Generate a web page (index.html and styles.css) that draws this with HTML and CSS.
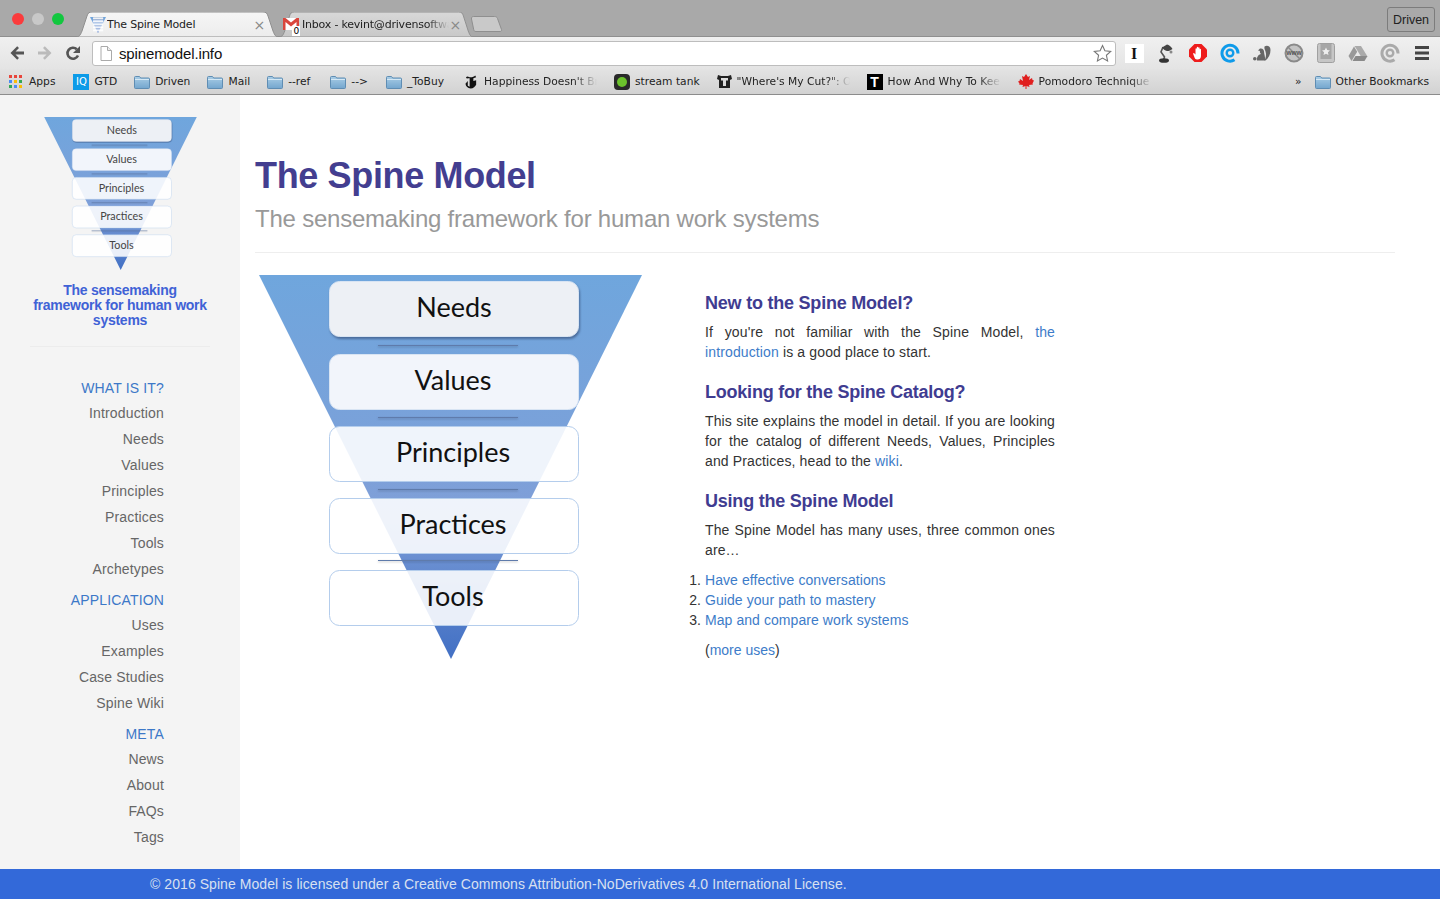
FILE: index.html
```html
<!DOCTYPE html>
<html lang="en">

<head>
  <meta charset="UTF-8">
  <title>The Spine Model</title>
  <link rel="stylesheet" href="styles.css">
</head>

<body>
  <svg class="defs" width="0" height="0">
    <defs>
      <linearGradient id="funnelFill" x1="0" y1="0" x2="0" y2="1">
        <stop offset="0" stop-color="#6fa6dd" />
        <stop offset="0.6" stop-color="#7f9fd8" />
        <stop offset="1" stop-color="#4270c4" />
      </linearGradient>
      <linearGradient id="folderFill" x1="0" y1="0" x2="0" y2="1">
        <stop offset="0" stop-color="#a9cde6" />
        <stop offset="1" stop-color="#74a6ce" />
      </linearGradient>
      <linearGradient id="tabOn" x1="0" y1="0" x2="0" y2="1">
        <stop offset="0" stop-color="#f6f6f6" />
        <stop offset="1" stop-color="#ececec" />
      </linearGradient>
      <linearGradient id="tabOff" x1="0" y1="0" x2="0" y2="1">
        <stop offset="0" stop-color="#d8d8d8" />
        <stop offset="1" stop-color="#c8c8c8" />
      </linearGradient>
      <symbol id="funnel" viewBox="0 0 383 384">
        <polygon points="0,0 383,0 192,384" fill="url(#funnelFill)" />
        <rect class="box box-top" x="70.5" y="6.5" width="249" height="55" rx="10" />
        <rect class="box box-second" x="70.5" y="79.5" width="249" height="55" rx="10" />
        <rect class="box box-clear" x="70.5" y="151.5" width="249" height="55" rx="10" />
        <rect class="box box-clear" x="70.5" y="223.5" width="249" height="55" rx="10" />
        <rect class="box box-clear" x="70.5" y="295.5" width="249" height="55" rx="10" />
        <line class="rule" x1="119" x2="259" y1="70.5" y2="70.5" />
        <line class="rule" x1="119" x2="259" y1="142.5" y2="142.5" />
        <line class="rule" x1="119" x2="259" y1="214.5" y2="214.5" />
        <line class="rule" x1="119" x2="259" y1="285.5" y2="285.5" />
        <text class="box-label" x="195" y="42">Needs</text>
        <text class="box-label" x="194" y="115">Values</text>
        <text class="box-label" x="194" y="187">Principles</text>
        <text class="box-label" x="194" y="259">Practices</text>
        <text class="box-label" x="194" y="331">Tools</text>
      </symbol>
      <symbol id="folder" viewBox="0 0 16 14">
        <path d="M0.5 2.500a1 1 0 0 1 1-1h4l1.200 1.500h7.800a1 1 0 0 1 1 1v8.500a1 1 0 0 1-1 1h-13a1 1 0 0 1-1-1z" fill="url(#folderFill)" stroke="#5f8db3" />
        <path d="M1 4.500h14" stroke="#d5e8f4" />
      </symbol>
      <symbol id="ring" viewBox="0 0 20 20">
        <path d="M14.500 16.800A8 8 0 1 1 18 10v.5" fill="none" stroke="currentColor" stroke-width="3" />
        <circle cx="10" cy="10" r="3.300" fill="none" stroke="currentColor" stroke-width="2.400" />
      </symbol>
    </defs>
  </svg>

  <header class="browser">
    <div class="title-bar">
      <div class="lights">
        <span class="light light-red"></span>
        <span class="light light-grey"></span>
        <span class="light light-green"></span>
      </div>
      <div class="tab tab-active">
        <svg class="tab-shape" viewBox="0 0 204 25" preserveAspectRatio="none">
          <path d="M0 25c4 0 5-1 7-6l5-15c1-3 2-4 5-4h171c3 0 4 1 5 4l5 15c2 5 3 6 6 6z" fill="url(#tabOn)" stroke="#8f8f8f" />
        </svg>
        <svg class="tab-icon" width="16" height="16"><use href="#funnel" /></svg>
        <span class="tab-title">The Spine Model</span>
        <span class="tab-close">×</span>
      </div>
      <div class="tab tab-other">
        <svg class="tab-shape" viewBox="0 0 204 25" preserveAspectRatio="none">
          <path d="M0 25c4 0 5-1 7-6l5-15c1-3 2-4 5-4h171c3 0 4 1 5 4l5 15c2 5 3 6 6 6z" fill="url(#tabOff)" stroke="#8f8f8f" />
        </svg>
        <span class="gmail-icon">
          <svg width="16" height="14" viewBox="0 0 16 14">
            <rect x="0" y="1" width="16" height="12" fill="#fff" />
            <path d="M0 1h2.500l5.500 4.500 5.500-4.500h2.500v12h-2.500v-8l-5.500 4.500-5.500-4.500v8h-2.500z" fill="#d9463d" />
          </svg>
          <span class="gmail-count">0</span>
        </span>
        <span class="tab-title tab-fade">Inbox - kevint@drivensoftware.com</span>
        <span class="tab-close">×</span>
      </div>
      <svg class="new-tab" width="34" height="16" viewBox="0 0 34 16">
        <path d="M1.500 3c-.3-1.500.5-2.500 2-2.500h21c1.500 0 2.500.5 3 2l4 11c.4 1-.2 2-1.500 2h-24c-1.500 0-2-.5-2.300-2z" fill="#c9c9c9" stroke="#8f8f8f" />
      </svg>
      <button class="profile">Driven</button>
    </div>

    <div class="toolbar">
      <svg class="nav-icon" viewBox="0 0 16 16"><path d="M15 6.500H6.500L10 3 8.200 1.300 1.500 8l6.700 6.700L10 13 6.500 9.500H15z" fill="#555" /></svg>
      <svg class="nav-icon" viewBox="0 0 16 16"><path d="M1 6.500h8.500L6 3l1.800-1.700L14.500 8l-6.700 6.700L6 13l3.500-3.500H1z" fill="#bbb" /></svg>
      <svg class="nav-icon" viewBox="0 0 16 16"><path d="M13 10.500A5.500 5.500 0 1 1 11.800 4.200" fill="none" stroke="#555" stroke-width="2.600" /><path d="M15 1v7H8z" fill="#555" /></svg>
      <div class="omnibox">
        <svg class="page-icon" width="12" height="15" viewBox="0 0 12 15"><path d="M1 .5h6.500l4 4v10H1z" fill="#fff" stroke="#aaa" /><path d="M7.500.5v4h4" fill="#eee" stroke="#aaa" /></svg>
        <span class="url">spinemodel.info</span>
        <svg class="star" width="19" height="19" viewBox="0 0 19 19"><path d="M9.500 1.500l2.400 5.300 5.800.6-4.300 3.900 1.200 5.700-5.100-2.900-5.100 2.900 1.200-5.700L1.300 7.400l5.800-.6z" fill="#fff" stroke="#777" stroke-width="1.100" /></svg>
      </div>
      <div class="extensions">
        <span class="ext"><span class="ext-i">I</span></span>
        <span class="ext">
          <svg width="16" height="19" viewBox="0 0 16 19"><path d="M5 3L3 8l3.500 5-1 3" fill="none" stroke="#555" stroke-width="1.600" /><path d="M4 3.500L9 .5c2 .5 4 2 5.500 4.500L12 6.500c-1 .5-2 .5-3 .5-2-.5-4-2-5-3.500z" fill="#444" /><circle cx="13" cy="8" r="1.500" fill="#888" /><ellipse cx="6" cy="16.500" rx="5" ry="2.300" fill="#333" /></svg>
        </span>
        <span class="ext">
          <svg width="18" height="18" viewBox="0 0 18 18"><path d="M5.500 0h7L18 5.500v7L12.500 18h-7L0 12.500v-7z" fill="#ee1c1c" /><path d="M4 9.500l1-.5 1.500 1.500V5c0-1 1.300-1 1.300 0V3.500c0-1 1.400-1 1.400 0V4c0-1 1.400-1 1.400 0v1.500c0-1 1.400-1 1.400 0V12c0 2.500-1.500 3.500-3.500 3.500H8c-1.500 0-2-1-2.500-2z" fill="#fff" /></svg>
        </span>
        <span class="ext ring-blue"><svg width="20" height="20"><use href="#ring" /></svg></span>
        <span class="ext">
          <svg width="18" height="16" viewBox="0 0 18 16"><circle cx="1.800" cy="13.800" r="1.800" fill="#666" /><path d="M4 15.500C3.500 12 5.500 9.500 8 9 7 8 6.500 7 7 6L5 5.500 7 3.500c2.500-.5 4 1 4 3 0 2.500 1.500 5 1 9z" fill="#666" /><path d="M11.500 1.500c2.500-1.500 6-.5 6 3.500 0 4.500-2 8-5 10.500h-1c1.500-3 2-6 1-9-.5-1.500-1.500-3-1-5z" fill="#666" /></svg>
        </span>
        <span class="ext">
          <svg width="20" height="20" viewBox="0 0 20 20"><circle cx="10" cy="10" r="8.500" fill="#c4c4c4" stroke="#8a8a8a" stroke-width="2" /><path d="M4 4l12 12" stroke="#8a8a8a" stroke-width="1.500" /><text class="www" x="10" y="12">www</text></svg>
        </span>
        <span class="ext">
          <svg width="18" height="20" viewBox="0 0 18 20"><rect x=".5" y=".5" width="17" height="19" rx="2" fill="#c6c6c6" stroke="#a0a0a0" /><rect x="3.500" y="1" width="11" height="15" fill="#a6a6a6" /><path d="M9 4.500l1.200 2.600 2.800.3-2.100 1.900.6 2.800L9 10.700l-2.500 1.400.6-2.800L5 7.400l2.800-.3z" fill="#eee" /></svg>
        </span>
        <span class="ext">
          <svg width="20" height="17" viewBox="0 0 20 17"><path d="M6.500 1h6.500l6.500 10.500h-6.500z" fill="#aaa" /><path d="M6 1.500l3.200 5.300L3.500 16 .5 11z" fill="#999" /><path d="M4.500 16l3-5h12l-3 5z" fill="#8a8a8a" /></svg>
        </span>
        <span class="ext ring-grey"><svg width="20" height="20"><use href="#ring" /></svg></span>
        <span class="ext">
          <svg width="14" height="14" viewBox="0 0 14 14"><path d="M0 1.500h14M0 7h14M0 12.500h14" stroke="#444" stroke-width="3" /></svg>
        </span>
      </div>
    </div>

    <nav class="bookmarks">
      <a class="bm">
        <svg class="apps-icon" width="13" height="13" viewBox="0 0 13 13">
          <rect width="3" height="3" fill="#e8453c" /><rect x="5" width="3" height="3" fill="#e8453c" /><rect x="10" width="3" height="3" fill="#e8453c" />
          <rect y="5" width="3" height="3" fill="#4a8af4" /><rect x="5" y="5" width="3" height="3" fill="#fbbc05" /><rect x="10" y="5" width="3" height="3" fill="#34a853" />
          <rect y="10" width="3" height="3" fill="#34a853" /><rect x="5" y="10" width="3" height="3" fill="#4a8af4" /><rect x="10" y="10" width="3" height="3" fill="#fbbc05" />
        </svg>Apps
      </a>
      <a class="bm push-1"><span class="iq-icon">IQ</span>GTD</a>
      <a class="bm"><svg class="folder" width="16" height="14"><use href="#folder" /></svg>Driven</a>
      <a class="bm"><svg class="folder" width="16" height="14"><use href="#folder" /></svg>Mail</a>
      <a class="bm"><svg class="folder" width="16" height="14"><use href="#folder" /></svg>--ref</a>
      <a class="bm push-3"><svg class="folder" width="16" height="14"><use href="#folder" /></svg>--&gt;</a>
      <a class="bm push-1"><svg class="folder" width="16" height="14"><use href="#folder" /></svg>_ToBuy</a>
      <a class="bm bm-nyt">
        <svg width="13" height="16" viewBox="0 0 14 16"><path d="M1 3c2-2 3 0 5 0s4-1 5-2l1 2-3 1v3l3-1v5c-1 2-3 4-6 4-3 0-5-2-5.500-5L3 7v5l2 1V4C3 4 2 5 1 3z" fill="#111" /></svg>
        <span class="bm-fade">Happiness Doesn't Bring Good Work</span>
      </a>
      <a class="bm">
        <span class="stream-icon"><span class="stream-dot"></span></span>stream tank
      </a>
      <a class="bm">
        <svg width="15" height="15" viewBox="0 0 15 15"><path d="M1 1c2 1 4 1 6.500 1S12 2 14 1l1 4-2 1v8H2V6L0 5z" fill="#222" /><path d="M4 4h7v2.500H9V12H6V6.500H4z" fill="#ddd" /></svg>
        <span class="bm-fade">"Where's My Cut?": On Unpaid</span>
      </a>
      <a class="bm">
        <span class="t-icon">T</span>
        <span class="bm-fade">How And Why To Keep Going</span>
      </a>
      <a class="bm">
        <svg width="16" height="15" viewBox="0 0 16 15"><path d="M8 0l2 3 2-1-1 4 3-2 .5 2 1.500.5-1.500 3 .5 1-4 .5.500 2-3-1v3H7.500v-3l-3 1 .5-2-4-.5.5-1L0 7.500 1.500 7 2 5l3 2-1-5 2 1z" fill="#e01f1f" /></svg>
        <span class="bm-fade">Pomodoro Technique Timer</span>
      </a>
      <span class="bm-more">»</span>
      <a class="bm"><svg class="folder" width="16" height="14"><use href="#folder" /></svg>Other Bookmarks</a>
    </nav>
  </header>

  <div class="layout">
    <aside class="sidebar">
      <svg class="side-logo" width="153" height="153"><use href="#funnel" /></svg>
      <p class="tagline">The sensemaking framework for human work systems</p>
      <hr class="side-rule">
      <ul class="side-nav">
        <li class="nav-head"><a href="#">WHAT IS IT?</a></li>
        <li><a href="#">Introduction</a></li>
        <li><a href="#">Needs</a></li>
        <li><a href="#">Values</a></li>
        <li><a href="#">Principles</a></li>
        <li><a href="#">Practices</a></li>
        <li><a href="#">Tools</a></li>
        <li><a href="#">Archetypes</a></li>
        <li class="nav-head"><a href="#">APPLICATION</a></li>
        <li><a href="#">Uses</a></li>
        <li><a href="#">Examples</a></li>
        <li><a href="#">Case Studies</a></li>
        <li><a href="#">Spine Wiki</a></li>
        <li class="nav-head"><a href="#">META</a></li>
        <li><a href="#">News</a></li>
        <li><a href="#">About</a></li>
        <li><a href="#">FAQs</a></li>
        <li><a href="#">Tags</a></li>
      </ul>
    </aside>

    <main class="main">
      <h1>The Spine Model</h1>
      <p class="subtitle">The sensemaking framework for human work systems</p>
      <hr class="main-rule">
      <div class="columns">
        <svg class="main-diagram" width="383" height="384"><use href="#funnel" /></svg>
        <section class="intro">
          <h3>New to the Spine Model?</h3>
          <p>If you're not familiar with the Spine Model, <a href="#">the introduction</a> is a good place to start.</p>
          <h3>Looking for the Spine Catalog?</h3>
          <p>This site explains the model in detail. If you are looking for the catalog of different Needs, Values, Principles and Practices, head to the <a href="#">wiki</a>.</p>
          <h3>Using the Spine Model</h3>
          <p>The Spine Model has many uses, three common ones are…</p>
          <ol>
            <li><a href="#">Have effective conversations</a></li>
            <li><a href="#">Guide your path to mastery</a></li>
            <li><a href="#">Map and compare work systems</a></li>
          </ol>
          <p class="more">(<a href="#">more uses</a>)</p>
        </section>
      </div>
    </main>
  </div>

  <footer class="footer">© 2016 Spine Model is licensed under a Creative Commons Attribution-NoDerivatives 4.0 International License.</footer>
</body>

</html>
```

FILE: styles.css
```css
* {
  box-sizing: border-box;
}

html,
body {
  margin: 0;
  height: 900px;
  overflow: hidden;
}

body {
  display: flex;
  flex-direction: column;
  font-family: "Liberation Sans", Arial, sans-serif;
  font-size: 14px;
  color: #333;
  background-color: #fff;
  padding-bottom: 1px;
}

a {
  color: #3d7cc9;
  text-decoration: none;
}

.defs {
  position: absolute;
}

/* diagram */
.box {
  stroke: #b4cdec;
  stroke-width: 1;
}

.box-top {
  fill: #edf0f5;
  stroke: #d8e4f3;
  filter: drop-shadow(1px 2px 1px rgba(40, 60, 100, 0.55));
}

.box-second {
  fill: #f2f5fb;
  stroke: #d8e4f3;
}

.box-clear {
  fill: rgba(255, 255, 255, 0.88);
}

.rule {
  stroke: #5f7bab;
  stroke-width: 1.2;
  filter: drop-shadow(0 1px 1px rgba(0, 0, 0, 0.25));
}

.box-label {
  font-family: Lato, "Open Sans", sans-serif;
  font-size: 27px;
  text-anchor: middle;
  fill: currentColor;
}

/* browser chrome */
.browser {
  flex: none;
  height: 95px;
  border-bottom: 1px solid #8c8c8c;
  font-family: "DejaVu Sans", sans-serif;
  font-size: 10.7px;
  color: #222;
}

.title-bar {
  display: flex;
  height: 37px;
  align-items: flex-end;
  background-color: #a9a9a9;
  border-bottom: 1px solid #8f8f8f;
  padding-left: 12px;
  position: relative;
}

.lights {
  display: flex;
  gap: 8px;
  align-self: flex-start;
  margin-top: 13px;
  width: 63px;
}

.light {
  width: 12px;
  height: 12px;
  border-radius: 50%;
}

.light-red {
  background-color: #fb3b3c;
}

.light-grey {
  background-color: #c8c8c8;
}

.light-green {
  background-color: #12c73f;
}

.tab {
  position: relative;
  display: flex;
  align-items: center;
  height: 25px;
  width: 204px;
  margin-bottom: -1px;
  padding: 0 14px 0 15px;
  font-size: 11px;
  letter-spacing: -0.2px;
}

.tab-active {
  z-index: 2;
}

.tab-other {
  width: 196px;
  margin-left: -1px;
  padding-left: 5px;
  padding-right: 13px;
}

.tab-shape {
  position: absolute;
  left: 0;
  top: 0;
  width: 100%;
  height: 100%;
}

.tab-icon,
.gmail-icon,
.tab-title,
.tab-close {
  position: relative;
}

.tab-icon {
  color: transparent;
  flex: none;
}

.tab-title {
  margin-left: 1px;
  flex: 1;
  white-space: nowrap;
  overflow: hidden;
}

.tab-fade {
  -webkit-mask-image: linear-gradient(to right, #000 85%, transparent);
  mask-image: linear-gradient(to right, #000 85%, transparent);
}

.tab-close {
  font-size: 14px;
  color: #888;
}

.gmail-icon {
  flex: none;
  width: 18px;
  height: 18px;
  padding-top: 1px;
}

.gmail-count {
  position: absolute;
  right: 1px;
  bottom: -2px;
  background-color: #fff;
  color: #000;
  font-size: 9px;
  line-height: 10px;
  padding: 0 1px;
}

.new-tab {
  margin-left: -4px;
  margin-bottom: 4px;
  flex: none;
}

.profile {
  position: absolute;
  right: 5px;
  top: 7px;
  width: 48px;
  height: 25px;
  padding: 0;
  background: transparent;
  border: 1px solid #7c7c7c;
  border-radius: 3px;
  font-family: "Liberation Sans", sans-serif;
  font-size: 12.5px;
  color: #222;
}

.toolbar {
  display: flex;
  align-items: center;
  height: 32px;
  padding: 0 2px 0 9px;
  gap: 12px;
  background: linear-gradient(#f0f0f0, #e4e4e4);
}

.nav-icon {
  flex: none;
  width: 16px;
  height: 16px;
}

.omnibox {
  display: flex;
  flex: 1;
  align-items: center;
  height: 25px;
  margin-left: -1px;
  padding: 0 3px 0 7px;
  background-color: #fff;
  border: 1px solid #bdbdbd;
  border-radius: 3px;
}

.url {
  flex: 1;
  margin-left: 7px;
  font-family: "Liberation Sans", sans-serif;
  font-size: 15px;
  letter-spacing: -0.13px;
  color: #111;
}

.extensions {
  display: flex;
  margin-left: -10px;
}

.ext {
  display: flex;
  align-items: center;
  justify-content: center;
  width: 32px;
  height: 24px;
}

.ring-blue {
  color: #0f9bea;
}

.ring-grey {
  color: #aaa;
}

.ext-i {
  display: block;
  width: 19px;
  height: 19px;
  background-color: #fff;
  font-family: "Liberation Serif", serif;
  font-size: 16px;
  font-weight: bold;
  line-height: 19px;
  text-align: center;
  color: #111;
}

.www {
  font-family: "Liberation Sans", sans-serif;
  font-size: 6.5px;
  font-weight: bold;
  text-anchor: middle;
  fill: #555;
}

.bookmarks {
  display: flex;
  align-items: center;
  gap: 17px;
  height: 25px;
  padding: 0 11px 0 9px;
  background: linear-gradient(#e3e3e3, #d2d2d2);
}

.bm {
  display: flex;
  align-items: center;
  gap: 5px;
  color: #222;
  white-space: nowrap;
}

.push-1 {
  margin-left: 1px;
}

.push-3 {
  margin-left: 3px;
}

.bm-nyt {
  gap: 6px;
  margin-left: 4px;
}

.apps-icon {
  margin-right: 2px;
}

.iq-icon {
  display: block;
  width: 16px;
  height: 16px;
  background-color: #0c9be8;
  color: #fff;
  font-size: 10px;
  line-height: 16px;
  text-align: center;
}

.stream-icon {
  display: flex;
  align-items: center;
  justify-content: center;
  width: 16px;
  height: 16px;
  background-color: #2a2a2a;
  border-radius: 4px;
}

.stream-dot {
  width: 10px;
  height: 10px;
  background-color: #6cc32c;
  border-radius: 50%;
}

.t-icon {
  display: block;
  width: 16px;
  height: 16px;
  background-color: #000;
  color: #fff;
  font-family: "Liberation Sans", sans-serif;
  font-size: 14px;
  font-weight: bold;
  line-height: 16px;
  text-align: center;
}

.bm-fade {
  display: block;
  width: 113px;
  overflow: hidden;
  -webkit-mask-image: linear-gradient(to right, #000 80%, transparent);
  mask-image: linear-gradient(to right, #000 80%, transparent);
}

.bm-more {
  margin-left: auto;
  margin-right: -4px;
}

/* page */
.layout {
  display: flex;
  flex: 1;
  min-height: 0;
}

.sidebar {
  flex: none;
  width: 240px;
  padding: 22px 30px 0;
  background-color: #f4f4f4;
}

.side-logo {
  display: block;
  margin: 0 0 0 14px;
  color: #444;
}

.tagline {
  margin: 13px 0 0;
  font-size: 14px;
  font-weight: bold;
  line-height: 15px;
  letter-spacing: -0.25px;
  text-align: center;
  color: #4062d6;
}

.side-rule {
  margin: 18px 0 0;
  border: 0;
  border-top: 1px solid #ececec;
}

.side-nav {
  list-style: none;
  margin: 28px 46px 0 0;
  padding: 0;
  text-align: right;
  letter-spacing: 0.15px;
}

.side-nav li {
  height: 26px;
  line-height: 26px;
}

.side-nav li a {
  color: #666;
}

.side-nav .nav-head {
  height: 25px;
  line-height: 27px;
}

.side-nav .nav-head a {
  color: #3c78c8;
}

.side-nav li + .nav-head {
  margin-top: 5px;
}

.main {
  flex: 1;
  padding: 0 45px 0 15px;
}

h1 {
  margin: 59px 0 0;
  font-size: 36px;
  line-height: 44px;
  font-weight: bold;
  letter-spacing: -0.35px;
  color: #433e90;
}

.subtitle {
  margin: 6px 0 0;
  font-size: 24px;
  line-height: 30px;
  letter-spacing: -0.22px;
  color: #999;
}

.main-rule {
  margin: 18px 0 0;
  border: 0;
  border-top: 1px solid #eee;
}

.columns {
  display: flex;
  padding: 22px 0 0 4px;
}

.main-diagram {
  flex: none;
  color: #111;
}

.intro {
  width: 350px;
  margin-left: 63px;
  padding-top: 17px;
  letter-spacing: 0.13px;
}

.intro h3 {
  margin: 0;
  font-size: 18px;
  line-height: 22px;
  font-weight: bold;
  letter-spacing: -0.22px;
  color: #3f3c91;
}

.intro p {
  margin: 8px 0 19px;
  line-height: 20px;
  text-align: justify;
}

.intro ol {
  margin: -9px 0 10px;
  padding: 0;
  line-height: 20px;
  letter-spacing: 0.07px;
}

.intro .more {
  margin: 0;
  letter-spacing: 0;
}

.footer {
  flex: none;
  height: 30px;
  padding-left: 150px;
  background-color: #3369d9;
  color: #d8e0f0;
  line-height: 30px;
  letter-spacing: 0.065px;
}
```
